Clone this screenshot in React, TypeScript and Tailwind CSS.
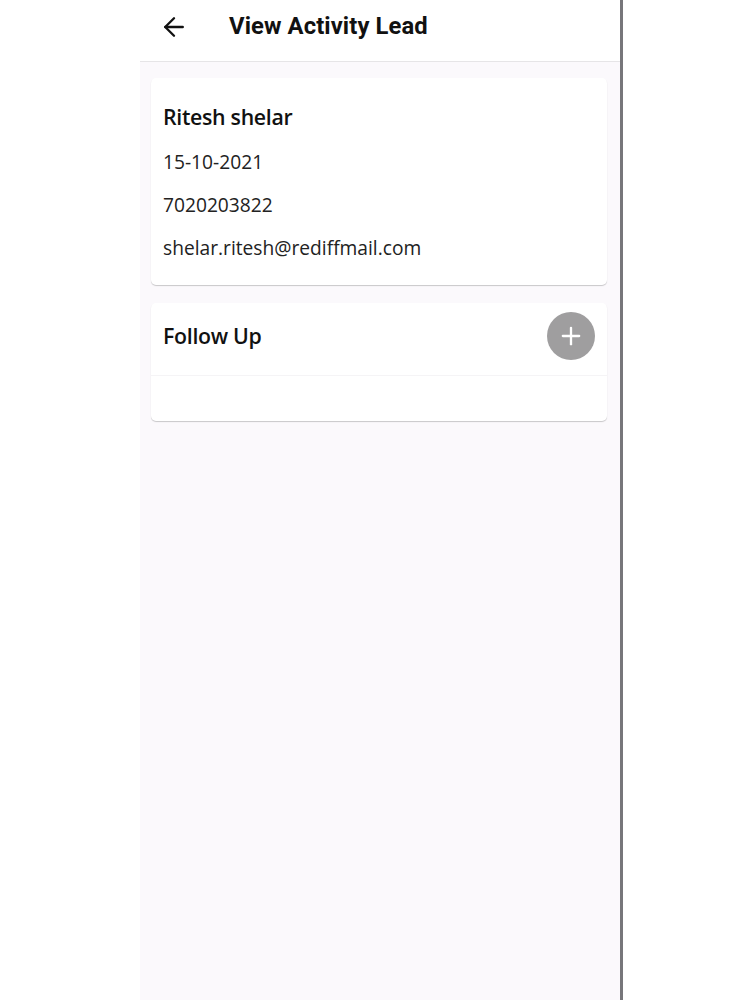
import { ArrowLeft, Plus } from "lucide-react";

const details = ["15-10-2021", "7020203822", "shelar.ritesh@rediffmail.com"];

export default function App() {
  return (
    <div className="flex h-[1000px] w-[750px] overflow-hidden bg-white font-['Open_Sans',sans-serif]">
      <div className="ml-[140px] flex w-[480px] flex-col bg-[#fbf9fc]">
        <header className="flex h-[62px] items-center border-b border-[#e6e5e7] bg-white pb-[8px] pl-[19px]">
          <ArrowLeft size={30} strokeWidth={1.9} className="text-[#111]" />
          <h1 className="ml-[40px] font-['Roboto',sans-serif] text-[23.8px] font-bold leading-none tracking-[0.1px] text-[#111]">
            View Activity Lead
          </h1>
        </header>

        <main className="flex flex-col gap-[18px] pl-[11px] pr-[13px] pt-[16px]">
          <section className="h-[207px] rounded-[5px] bg-white px-[12px] pt-[24px] shadow-[0_1px_1px_rgba(0,0,0,0.2)]">
            <h2 className="text-[21.3px] font-semibold leading-[30px] tracking-[-0.3px] text-[#111]">Ritesh shelar</h2>
            <div className="mt-[16px] flex flex-col gap-[15px]">
              {details.map((item) => (
                <p key={item} className="text-[19.2px] leading-[28px] text-[#222]">
                  {item}
                </p>
              ))}
            </div>
          </section>

          <section className="h-[118px] rounded-[5px] bg-white shadow-[0_1px_1px_rgba(0,0,0,0.2)]">
            <div className="flex h-[73px] items-center justify-between border-b border-[#f5f4f6] pb-[7px] pl-[12px] pr-[12px]">
              <h2 className="text-[21.3px] font-semibold tracking-[-0.3px] text-[#111]">Follow Up</h2>
              <button className="flex h-[48px] w-[48px] items-center justify-center rounded-full bg-[#9f9e9f]">
                <Plus size={28} strokeWidth={2} className="text-white" />
              </button>
            </div>
          </section>
        </main>
      </div>
      <div className="w-[3px] bg-[#77767a]" />
    </div>
  );
}
